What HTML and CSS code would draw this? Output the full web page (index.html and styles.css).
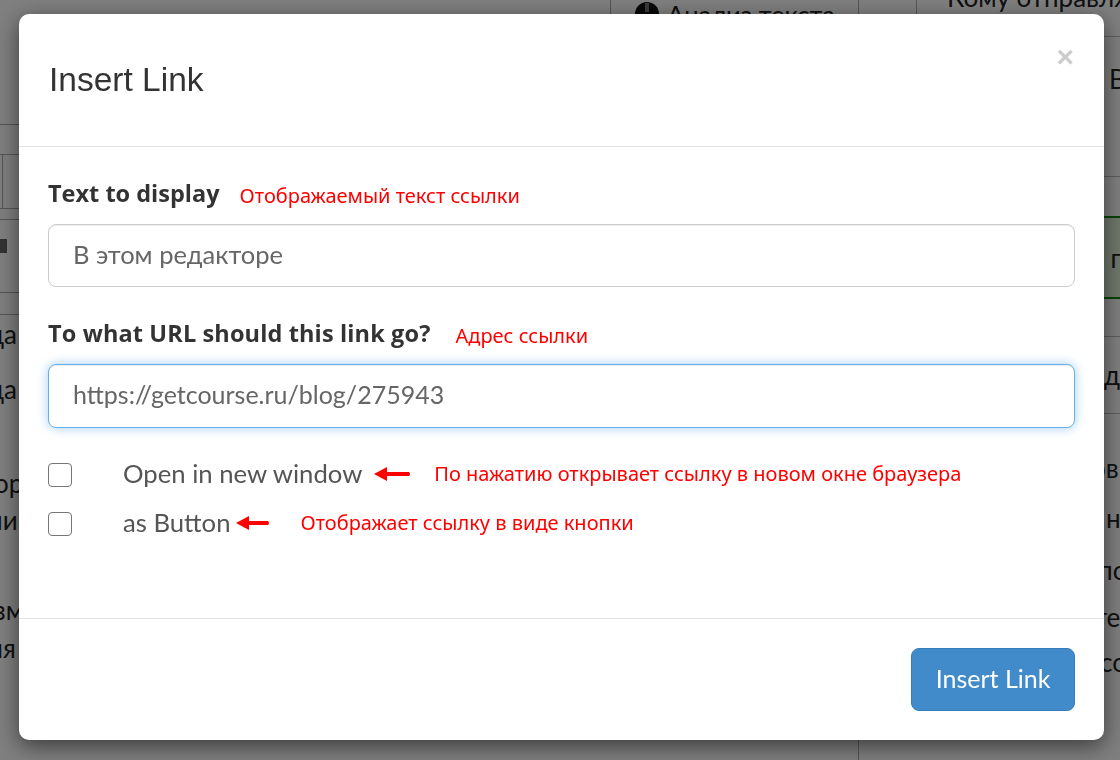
FILE: index.html
```html
<!DOCTYPE html>
<html lang="ru">
<head>
  <meta charset="UTF-8" />
  <title>Insert Link</title>
  <link rel="stylesheet" href="styles.css">
</head>
<body>
  <div class="page">
    <div class="col-left">
      <div class="strip strip-a"></div>
      <div class="strip strip-b"></div>
      <div class="strip strip-c"><span class="tick"></span></div>
      <div class="strip strip-d"></div>
      <div class="strip strip-e"><span class="handle"></span></div>
      <div class="strip strip-f"></div>
      <div class="bg-text bg-l1">да</div>
      <div class="bg-text bg-l2">да</div>
      <div class="bg-text bg-l3">ор</div>
      <div class="bg-text bg-l4">ни</div>
      <div class="bg-text bg-l5">зм</div>
      <div class="bg-text bg-l6">ия</div>
    </div>
    <div class="col-mid">
      <div class="analysis"><span class="analysis-icon"></span>Анализ текста</div>
    </div>
    <div class="col-narrow"></div>
    <div class="col-right">
      <div class="right-head"><div class="send-to">Кому отправлять</div></div>
      <div class="right-sub"><span class="bg-text">В</span></div>
      <div class="notice"><span class="bg-text">в п</span></div>
      <div class="right-gap"></div>
      <div class="right-row"><span class="bg-text">для</span></div>
      <div class="right-list">
        <div class="bg-text r1">ов</div>
        <div class="bg-text r2">н</div>
        <div class="bg-text r3">по</div>
        <div class="bg-text r4">те</div>
        <div class="bg-text r5">со</div>
      </div>
    </div>
  </div>
  <div class="backdrop"></div>

  <div class="modal">
    <div class="modal-header">
      <h4>Insert Link</h4>
      <span class="close">&times;</span>
    </div>
    <div class="modal-body">
      <div class="field">
        <div class="label-row">
          <label>Text to display</label>
          <span class="note note-text">Отображаемый текст ссылки</span>
        </div>
        <input class="text-input" type="text" value="В этом редакторе">
      </div>
      <div class="field">
        <div class="label-row">
          <label class="label-url">To what URL should this link go?</label>
          <span class="note note-url">Адрес ссылки</span>
        </div>
        <input class="text-input focused" type="text" value="https://getcourse.ru/blog/275943">
      </div>
      <div class="check-row">
        <input class="check" type="checkbox">
        <span class="check-label">Open in new window</span>
        <svg class="arrow arrow-long" width="37" height="16" viewBox="0 0 37 16"><path d="M0 8 L13 1 L13 6 L35 6 Q37 8 35 10 L13 10 L13 15 Z" fill="#ff0000"/></svg>
        <span class="note note-window">По нажатию открывает ссылку в новом окне браузера</span>
      </div>
      <div class="check-row check-row-2">
        <input class="check" type="checkbox">
        <span class="check-label">as Button</span>
        <svg class="arrow arrow-short" width="34" height="16" viewBox="0 0 34 16"><path d="M0 8 L13 1 L13 6 L32 6 Q34 8 32 10 L13 10 L13 15 Z" fill="#ff0000"/></svg>
        <span class="note note-button">Отображает ссылку в виде кнопки</span>
      </div>
    </div>
    <div class="modal-footer">
      <button class="btn-primary">Insert Link</button>
    </div>
  </div>
</body>
</html>
```

FILE: styles.css
```css
html, body {
  margin: 0;
  height: 760px;
  overflow: hidden;
}

body {
  font-family: 'Lato', 'Open Sans', sans-serif;
  color: #333;
  background-color: #fff;
}

/* page behind the dialog */
.page {
  display: grid;
  grid-template-columns: 610px 248px 58px 204px;
  height: 760px;
  overflow: hidden;
}

.bg-text {
  font-size: 26px;
  line-height: 30px;
  color: #222;
  white-space: nowrap;
}

.col-left {
  overflow: hidden;
}

.strip {
  box-sizing: border-box;
  border-bottom: 1px solid #aaa;
}

.strip-a { height: 125px; }
.strip-b { height: 30px; }
.strip-c { height: 54px; }
.strip-d { height: 11px; }
.strip-e { height: 54px; }
.strip-f { height: 22px; }

.tick {
  display: block;
  width: 1px;
  height: 53px;
  margin-left: 2px;
  background-color: #aaa;
}

.handle {
  display: block;
  width: 7px;
  height: 14px;
  margin-top: 19px;
  background-color: #666;
}

.bg-l1, .bg-l2, .bg-l4, .bg-l6 {
  margin-left: -12px;
}
.bg-l3, .bg-l5 {
  margin-left: -6px;
}
.bg-l1 { margin-top: 4px; }
.bg-l2 { margin-top: 25px; }
.bg-l3 { margin-top: 64px; }
.bg-l4 { margin-top: 7px; }
.bg-l5 { margin-top: 60px; }
.bg-l6 { margin-top: 8px; }

.col-narrow {
  border-left: 1px solid #aaa;
}

.analysis {
  display: flex;
  align-items: center;
  gap: 8px;
  height: 30px;
  padding-left: 24px;
  font-size: 25.5px;
  color: #222;
  border-left: 1px solid #aaa;
  margin-top: -1px;
}

.analysis-icon {
  position: relative;
  width: 24px;
  height: 24px;
  border-radius: 50%;
  background-color: #111;
}

.analysis-icon::after {
  content: "";
  position: absolute;
  left: 10px;
  top: 1px;
  width: 4px;
  height: 9px;
  background-color: #777;
}

.col-right {
  font-size: 26px;
  color: #222;
}

.right-head {
  display: flow-root;
  box-sizing: border-box;
  height: 37px;
  padding-left: 30px;
  border-left: 1px solid #aaa;
  border-bottom: 1px solid #bbb;
}

.send-to {
  line-height: 28px;
  margin-top: -17px;
  white-space: nowrap;
}

.right-sub {
  box-sizing: border-box;
  height: 140px;
  padding: 26px 0 0 193px;
  border-bottom: 1px solid #bbb;
}

.notice {
  box-sizing: border-box;
  height: 83px;
  margin-top: 39px;
  padding: 24px 0 0 175px;
  background-color: #dff0d8;
  border-top: 2px solid #0c8a0c;
  border-bottom: 2px solid #0c8a0c;
}

.right-gap {
  box-sizing: border-box;
  height: 38px;
  border-bottom: 1px solid #bbb;
}

.right-row {
  box-sizing: border-box;
  height: 77px;
  padding: 22px 0 0 188px;
  border-bottom: 1px solid #bbb;
}

.right-list {
  box-sizing: border-box;
  height: 310px;
  border-bottom: 1px solid #bbb;
}

.r1 { margin: 39px 0 0 175px; }
.r2 { margin: 20px 0 0 190px; }
.r3 { margin: 22px 0 0 182px; }
.r4 { margin: 17px 0 0 178px; }
.r5 { margin: 15px 0 0 184px; }

.backdrop {
  position: fixed;
  inset: 0;
  background-color: rgba(0, 0, 0, 0.5);
}

/* dialog */
.modal {
  position: fixed;
  left: 19px;
  top: 14px;
  width: 1085px;
  height: 726px;
  display: flex;
  flex-direction: column;
  background-color: #fff;
  border-radius: 10px;
  box-shadow: 0 6px 22px rgba(0, 0, 0, 0.55);
}

.modal-header {
  box-sizing: border-box;
  position: relative;
  height: 133px;
  padding: 44px 30px 0;
  border-bottom: 1px solid #e5e5e5;
}

.modal-header h4 {
  margin: 0;
  font-family: 'Liberation Sans', Arial, sans-serif;
  font-size: 33.5px;
  font-weight: 400;
  line-height: 44px;
  color: #333;
}

.close {
  position: absolute;
  right: 30px;
  top: 24px;
  font-family: 'Liberation Sans', Arial, sans-serif;
  font-size: 30px;
  font-weight: 700;
  line-height: 38px;
  color: #ccc;
}

.modal-body {
  flex: 1;
  padding: 29px 29px 0;
}

.field {
  margin-bottom: 29px;
}

.label-row {
  display: flex;
  align-items: center;
  height: 36px;
  margin-bottom: 12px;
}

.label-row label {
  font-family: 'Open Sans', sans-serif;
  font-size: 23.5px;
  font-weight: 700;
  color: #333;
  padding-bottom: 2px;
}

.label-row .label-url {
  letter-spacing: 0.13px;
}

.note {
  font-family: 'Noto Sans', 'Open Sans', sans-serif;
  font-size: 20px;
  color: #ff0000;
  white-space: nowrap;
}

.note-text { margin: 2px 0 0 20px; }
.note-url { margin: 2px 0 0 25px; }
.note-window { margin-left: 23px; padding-bottom: 3px; }
.note-button { margin-left: 31px; padding-bottom: 3px; }

.text-input {
  box-sizing: border-box;
  display: block;
  width: 100%;
  height: 63px;
  padding: 0 24px 4px;
  font-family: 'Lato', 'Open Sans', sans-serif;
  font-size: 25.5px;
  color: #666;
  background-color: #fff;
  border: 1px solid #ccc;
  border-radius: 8px;
  box-shadow: inset 0 1px 1px rgba(0, 0, 0, 0.075);
  outline: none;
}

.text-input.focused {
  height: 64px;
  font-size: 25px;
  border-color: #66afe9;
  box-shadow: inset 0 1px 1px rgba(0, 0, 0, 0.075), 0 0 11px rgba(102, 175, 233, 0.6);
}

.check-row {
  display: flex;
  align-items: center;
  height: 24px;
  margin-top: 35px;
}

.check-row-2 {
  margin-top: 25px;
}

.check {
  appearance: none;
  box-sizing: border-box;
  width: 24px;
  height: 24px;
  margin: 0 51px 0 0;
  background-color: #fff;
  border: 1px solid #767676;
  border-radius: 4px;
}

.check-label {
  font-size: 25.7px;
  color: #555;
  white-space: nowrap;
  padding-bottom: 4px;
}

.arrow {
  flex: none;
  margin-bottom: 2px;
}

.arrow-long { margin-left: 12px; }
.arrow-short { margin-left: 5px; }

.modal-footer {
  display: flex;
  justify-content: flex-end;
  padding: 29px;
  border-top: 1px solid #e5e5e5;
}

.btn-primary {
  width: 164px;
  height: 63px;
  padding: 0 0 4px;
  font-family: 'Lato', 'Open Sans', sans-serif;
  font-size: 25px;
  color: #fff;
  background-color: #428bca;
  border: 1px solid #357ebd;
  border-radius: 8px;
}
```
